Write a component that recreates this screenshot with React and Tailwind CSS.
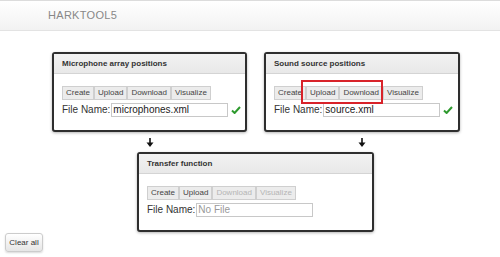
import React from "react";

const Btn = ({ children, disabled }) => (
  <span
    className={`inline-flex items-center h-[14px] px-[3px] border border-[#cfcfcf] bg-[#ececec] text-[8px] leading-none ${
      disabled ? "text-[#b5b5b5]" : "text-[#444]"
    }`}
  >
    {children}
  </span>
);

const Check = () => (
  <svg width="10" height="8" viewBox="0 0 10 8" className="ml-[3px] shrink-0">
    <path d="M1 4.5 L3.6 7 L9 1" stroke="#2e9a2e" strokeWidth="2" fill="none" />
  </svg>
);

const Box = ({ title, width, inputW, value, placeholder, disabledFrom, check, highlight }) => (
  <div
    className="border-2 border-[#2e2e2e] rounded-[3px] bg-white shadow-[0_1px_3px_rgba(0,0,0,0.3)] shrink-0"
    style={{ width }}
  >
    <div className="h-[20px] bg-gradient-to-b from-[#f2f2f2] to-[#e8e8e8] border-b border-[#d4d4d4] flex items-center pl-[8px] text-[8px] font-bold text-[#333]">
      {title}
    </div>
    <div className="pl-[8px] pt-[12px] pb-[13px]">
      <div className="flex relative">
        {["Create", "Upload", "Download", "Visualize"].map((b, i) => (
          <Btn key={b} disabled={disabledFrom !== undefined && i >= disabledFrom}>
            {b}
          </Btn>
        ))}
        {highlight && (
          <div className="absolute left-[27px] top-[-6px] w-[82px] h-[24px] border-2 border-[#d8232a]" />
        )}
      </div>
      <div className="flex items-center mt-[2px] text-[10px] text-[#333] whitespace-nowrap">
        <span className="mr-[1px]">File Name:</span>
        <div
          className="h-[14px] border border-[#c8c8c8] flex items-center px-[1px] text-[10px] leading-none shrink-0"
          style={{ width: inputW }}
        >
          {value ? (
            <span className="text-[#222]">{value}</span>
          ) : (
            <span className="text-[#999]">{placeholder}</span>
          )}
        </div>
        {check && <Check />}
      </div>
    </div>
  </div>
);

const Arrow = () => (
  <svg width="8" height="9" viewBox="0 0 8 9">
    <path d="M4 0 V6" stroke="#111" strokeWidth="1.6" />
    <path d="M0.5 4.5 L4 9 L7.5 4.5 Z" fill="#111" />
  </svg>
);

export default function App() {
  return (
    <div
      className="w-[500px] h-[257px] bg-white relative overflow-hidden"
      style={{ fontFamily: '"Liberation Sans", Arial, sans-serif' }}
    >
      <div className="h-[31px] bg-gradient-to-b from-white to-[#f2f2f2] border-b border-[#e3e3e3] border-t border-t-[#dcdcdc] flex items-center pl-[48px]">
        <span className="text-[11px] text-[#888] tracking-[0.3px]">HARKTOOL5</span>
      </div>
      <div className="flex gap-[17px] ml-[52px] mt-[21px]">
        <Box
          title="Microphone array positions"
          width={195}
          inputW={117}
          value="microphones.xml"
          check
        />
        <Box
          title="Sound source positions"
          width={196}
          inputW={117}
          value="source.xml"
          check
          highlight
        />
      </div>
      <div className="flex h-[20px] items-center">
        <div className="ml-[146px]">
          <Arrow />
        </div>
        <div className="ml-[204px]">
          <Arrow />
        </div>
      </div>
      <div className="ml-[137px]">
        <Box
          title="Transfer function"
          width={237}
          inputW={117}
          placeholder="No File"
          disabledFrom={2}
        />
      </div>
      <div className="absolute left-[5px] top-[233px] h-[19px] w-[38px] border border-[#ccc] rounded-[3px] bg-gradient-to-b from-white to-[#e6e6e6] shadow-[0_1px_2px_rgba(0,0,0,0.15)] flex items-center justify-center text-[8px] text-[#333]">
        Clear all
      </div>
    </div>
  );
}
